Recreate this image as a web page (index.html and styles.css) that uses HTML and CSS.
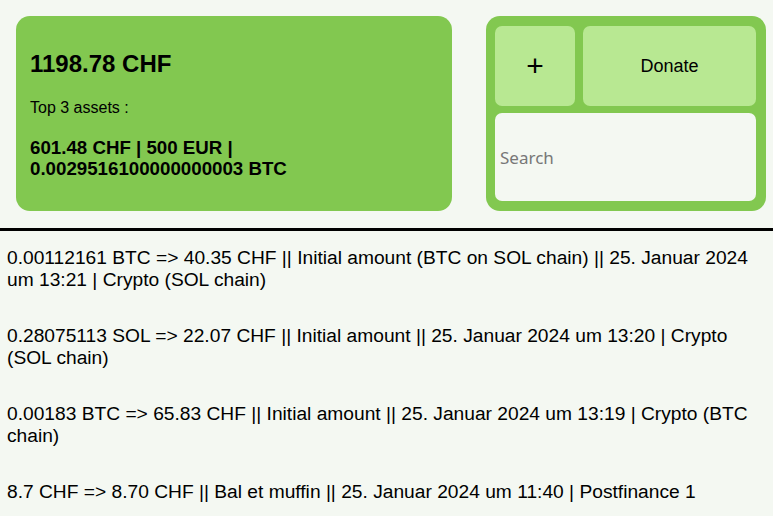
FILE: index.html
```html
<!DOCTYPE html>
<html>
<head>
<meta charset="utf-8">
<link rel="stylesheet" href="styles.css">
</head>
<body>
<header class="top">
  <section class="summary">
    <h1 class="total">1198.78 CHF</h1>
    <p class="label">Top 3 assets :</p>
    <p class="assets">601.48 CHF | 500 EUR | 0.0029516100000000003 BTC</p>
  </section>
  <section class="actions">
    <button class="btn plus">+</button>
    <button class="btn donate">Donate</button>
    <input class="search" type="text" placeholder="Search">
  </section>
</header>
<main class="list">
  <p class="entry">0.00112161 BTC =&gt; 40.35 CHF || Initial amount (BTC on SOL chain) || 25. Januar 2024 um 13:21 | Crypto (SOL chain)</p>
  <p class="entry">0.28075113 SOL =&gt; 22.07 CHF || Initial amount || 25. Januar 2024 um 13:20 | Crypto (SOL chain)</p>
  <p class="entry">0.00183 BTC =&gt; 65.83 CHF || Initial amount || 25. Januar 2024 um 13:19 | Crypto (BTC chain)</p>
  <p class="entry">8.7 CHF =&gt; 8.70 CHF || Bal et muffin || 25. Januar 2024 um 11:40 | Postfinance 1</p>
</main>
</body>
</html>
```
FILE: styles.css
```css
html, body {
  margin: 0;
  padding: 0;
  background: #f4f8f2;
  font-family: "Liberation Sans", Arial, sans-serif;
  color: #000;
}
.top {
  display: flex;
  justify-content: space-between;
  padding: 16px 7px 17px 16px;
  border-bottom: 3px solid #000;
}
.summary {
  width: 436px;
  height: 195px;
  box-sizing: border-box;
  background: #82c850;
  border-radius: 14px;
  padding: 34px 14px 0 14px;
}
.total {
  margin: 0;
  font-size: 24px;
  font-weight: bold;
  line-height: 28px;
}
.label {
  margin: 20px 0 0;
  font-size: 16px;
  line-height: 20px;
}
.assets {
  margin: 19px 0 0;
  font-size: 18.72px;
  font-weight: bold;
  line-height: 21px;
  width: 300px;
}
.actions {
  width: 280px;
  height: 195px;
  box-sizing: border-box;
  background: #82c850;
  border-radius: 14px;
  padding: 10px 10px 10px 9px;
  display: grid;
  grid-template-columns: 80px 1fr;
  grid-template-rows: 80px 1fr;
  gap: 7px 8px;
}
.btn {
  border: none;
  border-radius: 7px;
  background: #b8e892;
  font-family: "Liberation Sans", Arial, sans-serif;
  color: #000;
  padding: 0;
}
.plus {
  font-size: 30px;
}
.donate {
  font-size: 18px;
}
.search {
  grid-column: 1 / 3;
  border: none;
  border-radius: 7px;
  background: #f4f8f2;
  font-family: "Noto Sans", sans-serif;
  font-size: 17px;
  padding: 0 5px;
  outline: none;
}
.search::placeholder {
  color: #777;
}
.list {
  padding: 16px 7px 0 7px;
}
.entry {
  margin: 0 0 34px;
  font-size: 19.2px;
  line-height: 22px;
}
```
